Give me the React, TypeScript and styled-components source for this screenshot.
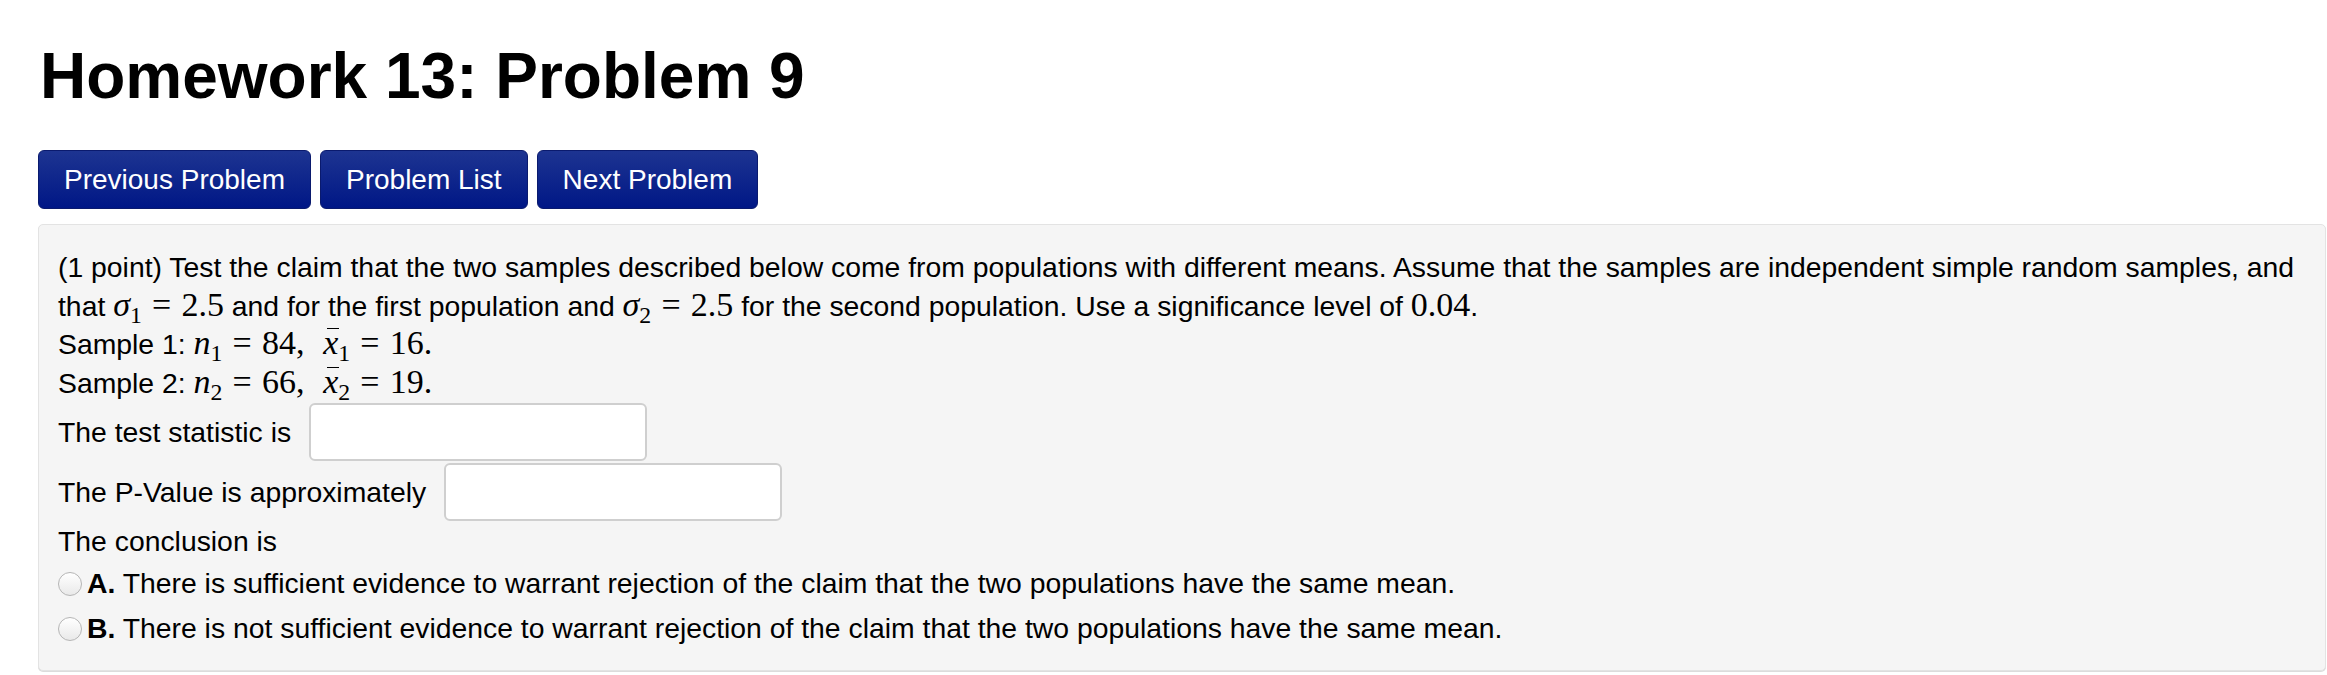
import styled, { createGlobalStyle } from 'styled-components'

const GlobalStyle = createGlobalStyle`
  html, body {
    margin: 0;
    padding: 0;
    background: #fff;
    color: #000;
    font-family: 'Liberation Sans', Arial, Helvetica, sans-serif;
  }
`

const App = () => {
  return (
    <>
      <GlobalStyle />
      <Page>
        <Title>Homework 13: Problem 9</Title>
        <Nav>
          <NavButton>Previous Problem</NavButton>
          <NavButton>Problem List</NavButton>
          <NavButton>Next Problem</NavButton>
        </Nav>
        <Well>
          <Text>
            (1 point) Test the claim that the two samples described below come from populations with
            different means. Assume that the samples are independent simple random samples, and
            that{' '}
            <M>
              <Mi>σ</Mi>
              <Sub>1</Sub>
              <Op>=</Op>2.5
            </M>{' '}
            and for the first population and{' '}
            <M>
              <Mi>σ</Mi>
              <Sub>2</Sub>
              <Op>=</Op>2.5
            </M>{' '}
            for the second population. Use a significance level of <M>0.04</M>.
          </Text>
          <Text>
            Sample 1:{' '}
            <M>
              <Mi>n</Mi>
              <Sub>1</Sub>
              <Op>=</Op>84,<Thin />
              <Bar>
                <Mi>x</Mi>
              </Bar>
              <Sub>1</Sub>
              <Op>=</Op>16.
            </M>
          </Text>
          <Text>
            Sample 2:{' '}
            <M>
              <Mi>n</Mi>
              <Sub>2</Sub>
              <Op>=</Op>66,<Thin />
              <Bar>
                <Mi>x</Mi>
              </Bar>
              <Sub>2</Sub>
              <Op>=</Op>19.
            </M>
          </Text>
          <AnswerRow>
            The test statistic is
            <AnswerInput type="text" />
          </AnswerRow>
          <AnswerRow>
            The P-Value is approximately
            <AnswerInput type="text" />
          </AnswerRow>
          <Text>The conclusion is</Text>
          <Option>
            <Radio />
            <span>
              <b>A.</b> There is sufficient evidence to warrant rejection of the claim that the two
              populations have the same mean.
            </span>
          </Option>
          <Option>
            <Radio />
            <span>
              <b>B.</b> There is not sufficient evidence to warrant rejection of the claim that the
              two populations have the same mean.
            </span>
          </Option>
        </Well>
      </Page>
    </>
  )
}

const Page = styled.div`
  padding: 41px 1px 2px 38px;
`

const Title = styled.h1`
  margin: 0 0 0 2px;
  font-size: 64px;
  line-height: 70px;
  font-weight: bold;
`

const Nav = styled.div`
  display: flex;
  gap: 9px;
  margin-top: 39px;
`

const NavButton = styled.button`
  height: 59px;
  padding: 0 25px;
  border: 1px solid #0a1a6e;
  border-radius: 6px;
  background: linear-gradient(#1d3491, #001786);
  color: #fff;
  font-family: 'Liberation Sans', Arial, Helvetica, sans-serif;
  font-size: 28px;
  cursor: pointer;
`

const Well = styled.div`
  margin-top: 15px;
  padding: 23px 19px 19px;
  background: #f5f5f5;
  border: 1px solid #e3e3e3;
  border-radius: 5px;
  box-shadow: 0 1px 0 #dcdcdc;
  font-size: 28.35px;
  line-height: 38.5px;
`

const Text = styled.div``

const M = styled.span`
  font-family: 'Liberation Serif', 'DejaVu Serif', serif;
  font-size: 34px;
  line-height: 0;
  white-space: nowrap;
`

const Mi = styled.i`
  font-style: italic;
`

const Sub = styled.span`
  font-size: 0.7em;
  vertical-align: -0.28em;
  line-height: 0;
`

const Op = styled.span`
  margin: 0 0.3em;
`

const Thin = styled.span`
  display: inline-block;
  width: 0.55em;
`

const Bar = styled.span`
  position: relative;
  &::before {
    content: '';
    position: absolute;
    left: 0.1em;
    right: -0.02em;
    top: 0.12em;
    border-top: 1.5px solid #000;
  }
`

const AnswerRow = styled.div`
  display: flex;
  align-items: center;
  gap: 18px;
  height: 60px;
`

const AnswerInput = styled.input`
  box-sizing: border-box;
  width: 338px;
  height: 58px;
  border: 2px solid #cfcfcf;
  border-radius: 6px;
  background: #fff;
  font-size: 28px;
  padding: 0 10px;
`

const Option = styled.div`
  display: flex;
  align-items: center;
  gap: 5px;
  height: 45px;
`

const Radio = styled.span`
  box-sizing: border-box;
  flex: none;
  width: 24px;
  height: 24px;
  border-radius: 50%;
  border: 1px solid #b5b5b5;
  background: linear-gradient(#ffffff, #e9e9e9);
  margin-top: 2px;
`

export default App
